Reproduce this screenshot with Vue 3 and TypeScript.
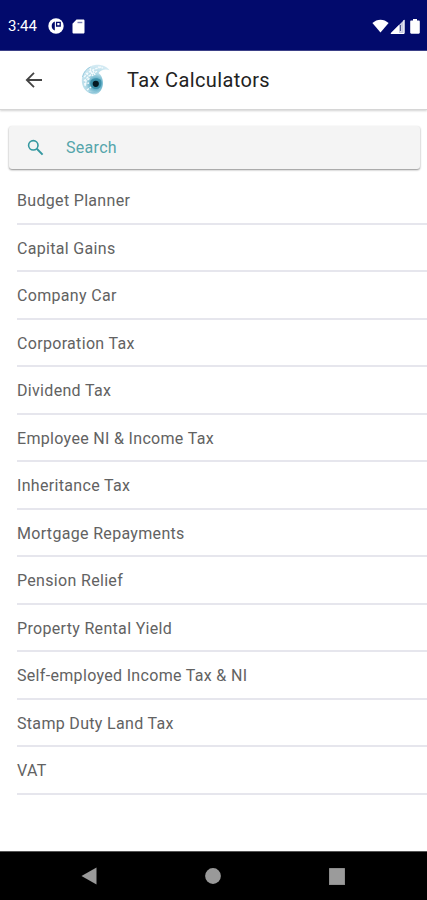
<script setup lang="ts">
import { ref, computed } from 'vue'

const calculators: string[] = [
  'Budget Planner',
  'Capital Gains',
  'Company Car',
  'Corporation Tax',
  'Dividend Tax',
  'Employee NI & Income Tax',
  'Inheritance Tax',
  'Mortgage Repayments',
  'Pension Relief',
  'Property Rental Yield',
  'Self-employed Income Tax & NI',
  'Stamp Duty Land Tax',
  'VAT',
]

const query = ref('')
const visible = computed(() =>
  calculators.filter((name) => name.toLowerCase().includes(query.value.toLowerCase())),
)
</script>

<template>
  <div class="screen">
    <div class="status">
      <span class="clock">3:44</span>
      <svg class="app-dot" width="16" height="16" viewBox="0 0 16 16">
        <circle cx="8" cy="8" r="7.7" fill="#fff" />
        <path d="M6.800 3.600A4.800 4.800 0 0 0 6.800 12.600z" fill="#020a6c" />
        <path d="M8.600 4.400h3.600v3.600H8.600z" fill="none" stroke="#020a6c" stroke-width="1.300" />
      </svg>
      <svg class="sd" width="13" height="15" viewBox="0 0 13 15">
        <path d="M4.5.5h6.7c.8 0 1.3.5 1.3 1.3v11.4c0 .8-.5 1.3-1.3 1.3H1.8c-.8 0-1.3-.5-1.3-1.3V4.700z" fill="#fff" />
        <path d="M5.500 2.800h4.800v1.400H5.500z" fill="#7b80b4" />
      </svg>
      <span class="grow"></span>
      <svg width="17" height="14" viewBox="0 0 17 14">
        <path d="M.4 4C5-.5 12-.5 16.6 4L8.5 13.6z" fill="#fff" />
      </svg>
      <svg class="signal" width="15" height="15" viewBox="0 0 15 15">
        <path d="M14.5.5v14H.5z" fill="#c9cbe2" />
        <path d="M9 6v8.5H.5z" fill="#fff" />
        <path d="M11 6.5v6M14 1v13.5H1" fill="none" stroke="#fff" />
        <path d="M10.5 6v6" stroke="#4c528f" stroke-width="1.2" />
      </svg>
      <svg class="battery" width="10" height="15" viewBox="0 0 10 15">
        <path d="M3 0h4v1.5h1.700c.7 0 1.100.5 1.100 1.100v11c0 .7-.4 1.200-1.100 1.200H1.300c-.7 0-1.100-.5-1.100-1.200v-11c0-.6.4-1.100 1.100-1.100H3z" fill="#fff" />
      </svg>
    </div>

    <header class="toolbar">
      <svg class="back" width="18" height="18" viewBox="0 0 18 18">
        <path d="M17 9H2M9 1.8L1.8 9 9 16.2" fill="none" stroke="#444" stroke-width="1.8" />
      </svg>
      <svg class="logo" width="30" height="32" viewBox="0 0 30 32">
        <defs>
          <radialGradient id="swirl" cx="15" cy="20" r="18" gradientUnits="userSpaceOnUse">
            <stop offset="0" stop-color="#257c96" />
            <stop offset=".28" stop-color="#5fadc6" />
            <stop offset=".55" stop-color="#b0d9e6" />
            <stop offset="1" stop-color="#d3eaf3" />
          </radialGradient>
        </defs>
        <path d="M28.500 6.300C24 4.600 20 6 17.500 9C20.500 11 22.600 16 21.800 21C21 27 17 30.800 12 30.300C5 29 .5 23 .8 16C1 8 7 2 14 1C20 .3 26 2.500 28.500 6.300Z" fill="url(#swirl)" />
        <path d="M3 13l5-5 6-3 6-2M3 17l4-4 5-4 5-2M4 22l1-5 4-3M9 4l1 4 2 4M5 9l3 3M3 20l5-1M6 26l4-3M17 3l5 1M12 6l2 5" fill="none" stroke="#f5fbfd" stroke-width="1.400" stroke-dasharray="2.500 1" />
        <path d="M8 28c4 2 9 0 11-4M1.500 13c1-5 4-8 8-10" fill="none" stroke="#83bfd5" stroke-width="1" opacity=".7" />
        <path d="M9.500 17c1-3 7-4 10.500-1c1 4 0 8-4 9c-4 .8-8-3-6.500-8z" fill="#3489a3" opacity=".8" />
        <circle cx="14.800" cy="19.800" r="3.100" fill="#041922" />
      </svg>
      <h1 class="title">Tax Calculators</h1>
    </header>

    <main class="content">
      <label class="search">
        <svg width="17" height="17" viewBox="0 0 17 17">
          <circle cx="6.300" cy="6.300" r="4.700" fill="none" stroke="#3598a0" stroke-width="1.600" />
          <path d="M9.800 9.800l5.800 5.800" stroke="#3598a0" stroke-width="2" />
        </svg>
        <input v-model="query" type="text" placeholder="Search" />
      </label>
      <ul class="list">
        <li v-for="name in visible" :key="name">{{ name }}</li>
      </ul>
    </main>

    <nav class="nav">
      <svg width="16" height="18" viewBox="0 0 16 18"><path d="M15.500.5v17L.5 9z" fill="#999" /></svg>
      <svg width="16" height="16" viewBox="0 0 16 16"><circle cx="8" cy="8" r="7.900" fill="#999" /></svg>
      <svg width="16" height="17" viewBox="0 0 16 17"><rect width="16" height="17" rx=".5" fill="#8c8c8c" /><rect x="1" y="1" width="14" height="15" fill="#9b9b9b" /></svg>
    </nav>
  </div>
</template>

<style>
body {
  margin: 0;
  background: #fff;
}
</style>

<style scoped>
.screen {
  display: flex;
  flex-direction: column;
  width: 427px;
  height: 900px;
  overflow: hidden;
  background: #fff;
  font-family: Roboto, "Liberation Sans", sans-serif;
}
svg {
  display: block;
  flex: none;
}
.status {
  display: flex;
  align-items: center;
  box-sizing: border-box;
  height: 51px;
  flex: none;
  padding: 2px 7px 0 8px;
  background: #020a6c;
  border-bottom: 1px solid #3c4189;
}
.clock {
  width: 40px;
  color: #fff;
  font-size: 15px;
  font-weight: 400;
}
.sd {
  margin-left: 8px;
}
.grow {
  flex: 1;
}
.signal {
  margin-left: 1px;
}
.battery {
  margin-left: 5px;
}
.toolbar {
  display: flex;
  align-items: center;
  flex: none;
  height: 58px;
  padding-left: 25px;
  background: #fff;
  border-bottom: 1px solid #d6d6d6;
  box-shadow: 0 1px 2px rgba(0, 0, 0, 0.18);
}
.logo {
  margin-left: 38px;
}
.title {
  margin: 0 0 0 16px;
  color: #222;
  font-size: 20px;
  font-weight: 400;
  letter-spacing: 0.37px;
}
.content {
  flex: 1;
  min-height: 0;
  padding-top: 16px;
}
.search {
  display: flex;
  align-items: center;
  box-sizing: border-box;
  height: 43px;
  margin: 0 7px 0 9px;
  padding-left: 18px;
  background: #f4f4f4;
  border-radius: 3px;
  box-shadow: 0 1px 2px rgba(0, 0, 0, 0.45);
}
.search input {
  flex: 1;
  min-width: 0;
  margin-left: 22px;
  padding: 0;
  border: 0;
  outline: 0;
  background: transparent;
  color: #3598a0;
  font: 400 16px Roboto, "Liberation Sans", sans-serif;
  letter-spacing: 0.3px;
}
.search input::placeholder {
  color: #55a5ab;
  opacity: 1;
}
.list {
  margin: 8px 0 0 17px;
  padding: 0;
  list-style: none;
}
.list li {
  box-sizing: border-box;
  height: 47.53px;
  border-bottom: 2px solid #e6e6ed;
  color: #626262;
  font-size: 16px;
  line-height: 47.5px;
  letter-spacing: 0.32px;
}
.nav {
  display: flex;
  align-items: center;
  justify-content: space-between;
  box-sizing: border-box;
  flex: none;
  height: 49px;
  padding: 0 82px 0 81px;
  background: #000;
  border-top: 1px solid #555;
}
</style>
